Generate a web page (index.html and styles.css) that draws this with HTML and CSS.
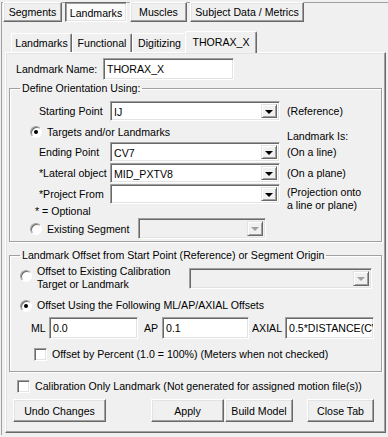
FILE: index.html
```html
<!DOCTYPE html>
<html lang="en">

<head>
    <meta charset="UTF-8">
    <meta name="viewport" content="width=device-width, initial-scale=1.0">
    <title>Landmarks</title>
    <link rel="stylesheet" href="styles.css">
</head>

<body>
    <div class="frame">
        <!-- Abas principais -->
        <div class="main-tabs">
            <div class="mtab w-seg">Segments</div>
            <div class="mtab w-lm active">Landmarks</div>
            <div class="mtab w-mus">Muscles</div>
            <div class="mtab w-sub">Subject Data / Metrics</div>
        </div>

        <!-- Abas do landmark -->
        <div class="sub-tabs">
            <div class="stab w-1">Landmarks</div>
            <div class="stab w-2">Functional</div>
            <div class="stab w-3">Digitizing</div>
            <div class="stab w-4 active">THORAX_X</div>
        </div>

        <div class="page">
            <div class="name-row">
                <span class="name-label">Landmark Name:</span>
                <div class="text name-box">THORAX_X</div>
            </div>

            <fieldset class="group group-orient">
                <legend>Define Orientation Using:</legend>
                <div class="orient-grid">
                    <span class="lbl">Starting Point</span>
                    <div class="combo"><span class="val">IJ</span><span class="drop"></span></div>
                    <span class="note">(Reference)</span>

                    <div class="opt span2"><span class="radio checked"></span>Targets and/or Landmarks</div>
                    <span class="note note-end">Landmark Is:</span>

                    <span class="lbl">Ending Point</span>
                    <div class="combo"><span class="val">CV7</span><span class="drop"></span></div>
                    <span class="note">(On a line)</span>

                    <span class="lbl">*Lateral object</span>
                    <div class="combo"><span class="val">MID_PXTV8</span><span class="drop"></span></div>
                    <span class="note">(On a plane)</span>

                    <span class="lbl">*Project From</span>
                    <div class="combo"><span class="val"></span><span class="drop"></span></div>
                    <span class="note note-two">(Projection onto<br>a line or plane)</span>

                    <span class="lbl optional">* = Optional</span>
                    <span></span>
                    <span></span>

                    <div class="opt span3 seg-row">
                        <span class="seg-text"><span class="radio"></span>Existing Segment</span>
                        <div class="combo disabled seg-combo"><span class="val"></span><span class="drop"></span></div>
                    </div>
                </div>
            </fieldset>

            <fieldset class="group group-offset">
                <legend>Landmark Offset from Start Point (Reference) or Segment Origin</legend>
                <div class="calib-row">
                    <span class="radio"></span>
                    <span class="calib-text">Offset to Existing Calibration<br>Target or Landmark</span>
                    <div class="combo disabled calib-combo"><span class="val"></span><span class="drop"></span></div>
                </div>
                <div class="opt using-row"><span class="radio checked"></span>Offset Using the Following ML/AP/AXIAL Offsets</div>
                <div class="axes-row">
                    <span class="ax ax-ml">ML</span>
                    <div class="text ax-box w-ml">0.0</div>
                    <span class="ax ax-ap">AP</span>
                    <div class="text ax-box w-ap">0.1</div>
                    <span class="ax ax-axial">AXIAL</span>
                    <div class="text ax-box w-axial">0.5*DISTANCE(CV7,IJ)</div>
                </div>
                <div class="check-row percent"><span class="check"></span>Offset by Percent (1.0 = 100%) (Meters when not checked)</div>
            </fieldset>

            <div class="check-row calib-only"><span class="check"></span>Calibration Only Landmark (Not generated for assigned motion file(s))</div>

            <div class="buttons">
                <div class="btn w-undo">Undo Changes</div>
                <div class="btn w-apply">Apply</div>
                <div class="btn w-build">Build Model</div>
                <div class="btn w-close">Close Tab</div>
            </div>
        </div>
    </div>
</body>

</html>
```

FILE: styles.css
```css
body {
    margin: 0;
    width: 388px;
    height: 437px;
    overflow: hidden;
    background-color: #f0f0f0;
    font-family: "Liberation Sans", Arial, sans-serif;
    font-size: 10.6px;
    color: #000;
}

.frame {
    margin: 2px 0 0 1px;
    border-top: 1px solid #a0a0a0;
    border-left: 1px solid #a0a0a0;
    height: 432px;
}

/* Abas principais (estilo botao) */
.main-tabs {
    display: flex;
    gap: 3px;
    margin: -1px 0 0 1px;
}

.mtab {
    height: 20px;
    box-sizing: border-box;
    display: flex;
    align-items: center;
    justify-content: center;
    background-color: #f0f0f0;
    border: 1px solid;
    border-color: #fff #696969 #696969 #fff;
    box-shadow: inset -1px -1px #a0a0a0, inset 1px 1px #e3e3e3;
}

.mtab.active {
    background-color: #fafafa;
    border-color: #696969 #fff #fff #696969;
    box-shadow: inset 1px 1px #a0a0a0, inset -1px -1px #e3e3e3;
    padding-top: 1px;
}

.w-seg { width: 59px; }
.w-lm { width: 62px; }
.w-mus { width: 57px; }
.w-sub { width: 114px; }

/* Abas internas */
.sub-tabs {
    display: flex;
    align-items: flex-end;
    height: 21px;
    margin: 9px 0 0 9px;
}

.stab {
    height: 19px;
    box-sizing: border-box;
    display: flex;
    align-items: center;
    justify-content: center;
    padding-bottom: 1px;
    border: 1px solid;
    border-bottom: none;
    border-color: #fff #696969 #fff #fff;
    border-radius: 2px 2px 0 0;
    box-shadow: inset -1px 0 #a0a0a0;
}

.stab.active {
    height: 22px;
    margin: 0 -2px -1px -2px;
    background-color: #f0f0f0;
    position: relative;
    z-index: 1;
    padding-bottom: 2px;
}

.w-1 { width: 61px; }
.w-2 { width: 60px; }
.w-3 { width: 55px; }
.w-4 { width: 72px; }

.page {
    margin-left: 3px;
    width: 381px;
    height: 381px;
    box-sizing: border-box;
    border: 1px solid;
    border-color: #fff #696969 #696969 #fff;
    box-shadow: inset -1px -1px #a0a0a0, inset 1px 1px #e3e3e3;
}

/* Controles */
.text, .combo {
    box-sizing: border-box;
    background-color: #fff;
    border: 1px solid;
    border-color: #a0a0a0 #fff #fff #a0a0a0;
    box-shadow: inset 1px 1px #696969, inset -1px -1px #e3e3e3;
    white-space: nowrap;
    overflow: hidden;
}

.text {
    height: 21px;
    line-height: 19px;
    padding-left: 3px;
}

.combo {
    height: 20px;
    display: flex;
    align-items: stretch;
    padding: 2px;
}

.combo .val {
    flex: 1;
    line-height: 16px;
    padding-left: 1px;
}

.combo .drop {
    width: 16px;
    box-sizing: border-box;
    border: 1px solid;
    border-color: #e3e3e3 #696969 #696969 #e3e3e3;
    box-shadow: inset 1px 1px #fff, inset -1px -1px #a0a0a0;
    background-color: #f0f0f0;
    display: flex;
    align-items: center;
    justify-content: center;
}

.combo .drop::after {
    content: "";
    border-left: 4px solid transparent;
    border-right: 4px solid transparent;
    border-top: 4px solid #000;
    margin-top: 1px;
}

.combo.disabled {
    background-color: #f0f0f0;
}

.combo.disabled .drop::after {
    border-top-color: #a0a0a0;
}

.radio {
    width: 12px;
    height: 12px;
    box-sizing: border-box;
    flex: none;
    border-radius: 50%;
    background-color: #fff;
    border: 1px solid;
    border-color: #a0a0a0 #fff #fff #a0a0a0;
    box-shadow: inset 1px 1px #696969;
    display: inline-flex;
    align-items: center;
    justify-content: center;
    margin-right: 5px;
}

.radio.checked::after {
    content: "";
    width: 4px;
    height: 4px;
    border-radius: 50%;
    background-color: #000;
}

.check {
    width: 13px;
    height: 13px;
    box-sizing: border-box;
    flex: none;
    background-color: #fff;
    border: 1px solid;
    border-color: #a0a0a0 #fff #fff #a0a0a0;
    box-shadow: inset 1px 1px #696969, inset -1px -1px #e3e3e3;
    margin-right: 5px;
}

.btn {
    height: 23px;
    box-sizing: border-box;
    display: flex;
    align-items: center;
    justify-content: center;
    border: 1px solid;
    border-color: #fff #696969 #696969 #fff;
    box-shadow: inset -1px -1px #a0a0a0, inset 1px 1px #e3e3e3;
}

/* Nome */
.name-row {
    display: flex;
    align-items: center;
    margin: 5px 0 0 10px;
}

.name-label {
    width: 87px;
}

.name-box {
    width: 131px;
    height: 22px;
    line-height: 20px;
}

/* Grupos */
.group {
    margin: 2px 0 0 3px;
    padding: 0;
    width: 373px;
    box-sizing: border-box;
    min-width: 0;
    border: 1px solid #a0a0a0;
    box-shadow: inset 1px 1px #fff, 1px 1px #fff;
}

.group legend {
    margin-left: 10px;
    padding: 0 2px;
    line-height: 12px;
}

.orient-grid {
    display: grid;
    grid-template-columns: 71px 170px auto;
    grid-template-rows: 20px 21px 21px 21px 21px 12px 21px;
    padding: 7px 0 3px 29px;
    align-items: start;
}

.lbl {
    line-height: 20px;
}

.note {
    margin-left: 7px;
    line-height: 20px;
}

.note-end {
    align-self: end;
    line-height: 12px;
}

.note-two {
    line-height: 13px;
    padding-top: 2px;
}

.optional {
    margin-left: -4px;
    line-height: 12px;
}

.opt {
    display: flex;
    align-items: center;
}

.span2 {
    grid-column: 1 / 3;
    margin-left: -9px;
    align-self: center;
}

.span3 {
    grid-column: 1 / 4;
    margin: 1px 0 0 -9px;
}

.seg-text {
    display: flex;
    align-items: center;
    width: 108px;
}

.seg-combo {
    width: 128px;
    height: 21px;
}

.group-offset {
    margin-top: 7px;
    padding-bottom: 10px;
}

.calib-row {
    display: flex;
    align-items: flex-start;
    margin: 4px 0 0 10px;
    height: 26px;
}

.calib-row .radio {
    margin-top: 5px;
}

.calib-text {
    line-height: 13px;
    width: 152px;
}

.calib-combo {
    margin-top: 3px;
    width: 183px;
    height: 21px;
}

.using-row {
    margin: 8px 0 0 10px;
    line-height: 13px;
}

.axes-row {
    display: flex;
    align-items: center;
    margin: 5px 0 0 21px;
}

.ax-box {
    height: 22px;
    line-height: 20px;
}

.ax-ml { width: 18px; }
.ax-ap { width: 18px; margin-left: 6px; }
.ax-axial { width: 33px; margin-left: 3px; }
.w-ml { width: 89px; }
.w-ap { width: 87px; }
.w-axial { width: 89px; }

.check-row {
    display: flex;
    align-items: center;
    line-height: 13px;
}

.percent {
    margin: 9px 0 0 24px;
}

.calib-only {
    margin: 8px 0 0 11px;
}

.buttons {
    display: flex;
    margin: 6px 0 0 7px;
}

.w-undo { width: 93px; }
.w-apply { width: 73px; margin-left: 45px; }
.w-build { width: 68px; margin-left: 1px; }
.w-close { width: 67px; margin-left: 14px; }
```
